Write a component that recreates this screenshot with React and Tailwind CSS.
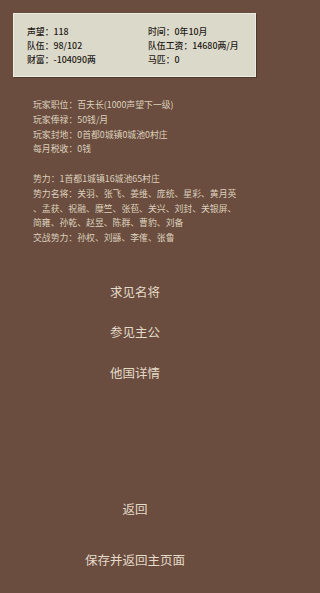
import { useState } from "react";

const STATS = [
  ["声望", "118", "时间", "0年10月"],
  ["队伍", "98/102", "队伍工资", "14680两/月"],
  ["财富", "-104090两", "马匹", "0"],
];

const PLAYER_INFO = [
  ["玩家职位", "百夫长(1000声望下一级)"],
  ["玩家俸禄", "50钱/月"],
  ["玩家封地", "0首都0城镇0城池0村庄"],
  ["每月税收", "0钱"],
];

// 原图里 "、" 会出现在行首，这里按原样手动断行
const FORCE_LINES = [
  "势力：1首都1城镇16城池65村庄",
  "势力名将：关羽、张飞、姜维、庞统、星彩、黄月英",
  "、孟获、祝融、糜竺、张苞、关兴、刘封、关银屏、",
  "简雍、孙乾、赵昱、陈群、曹豹、刘备",
  "交战势力：孙权、刘繇、李傕、张鲁",
];

const ACTIONS = ["求见名将", "参见主公", "他国详情"];

export default function App() {
  const [last, setLast] = useState("");

  return (
    <div className="min-h-screen w-full bg-[#6a4d3e]">
      <div
        className="flex min-h-[593px] w-[270px] flex-col bg-[#6a4d3e] text-[#dccfbd]"
        style={{ fontFamily: '"Noto Sans CJK SC", "Noto Sans", sans-serif' }}
        data-last={last}
      >
        <section className="mx-[13px] mt-[13px] mr-[14px] h-[64px] border border-[#ecebe2] bg-[#dbd9ca] pl-[13px] pt-[11px] shadow-[1px_1px_0_#4e372b] text-[8.85px] font-medium leading-[14px] text-[#1f1a16]">
          {STATS.map(([k1, v1, k2, v2]) => (
            <div key={k1} className="grid grid-cols-[121px_1fr]">
              <span>
                {k1}：{v1}
              </span>
              <span>
                {k2}：{v2}
              </span>
            </div>
          ))}
        </section>

        <section className="mt-[21px] px-[33px] text-[8.85px] leading-[14.8px] whitespace-nowrap">
          {PLAYER_INFO.map(([k, v]) => (
            <div key={k}>
              {k}：{v}
            </div>
          ))}
          <div className="h-[14.8px]" />
          {FORCE_LINES.map((line) => (
            <div key={line}>{line}</div>
          ))}
        </section>

        <nav className="mt-[26px] flex flex-col items-center">
          {ACTIONS.map((label) => (
            <button
              key={label}
              type="button"
              onClick={() => setLast(label)}
              className="h-[40.5px] text-[12.5px] text-[#e4dac9]"
            >
              {label}
            </button>
          ))}
        </nav>

        <div className="mt-[96px] flex flex-col items-center">
          <button
            type="button"
            onClick={() => setLast("返回")}
            className="h-[40px] text-[12.5px] text-[#e4dac9]"
          >
            返回
          </button>
          <button
            type="button"
            onClick={() => setLast("保存并返回主页面")}
            className="mt-[11px] h-[40px] text-[12.5px] text-[#e4dac9]"
          >
            保存并返回主页面
          </button>
        </div>
      </div>
    </div>
  );
}
